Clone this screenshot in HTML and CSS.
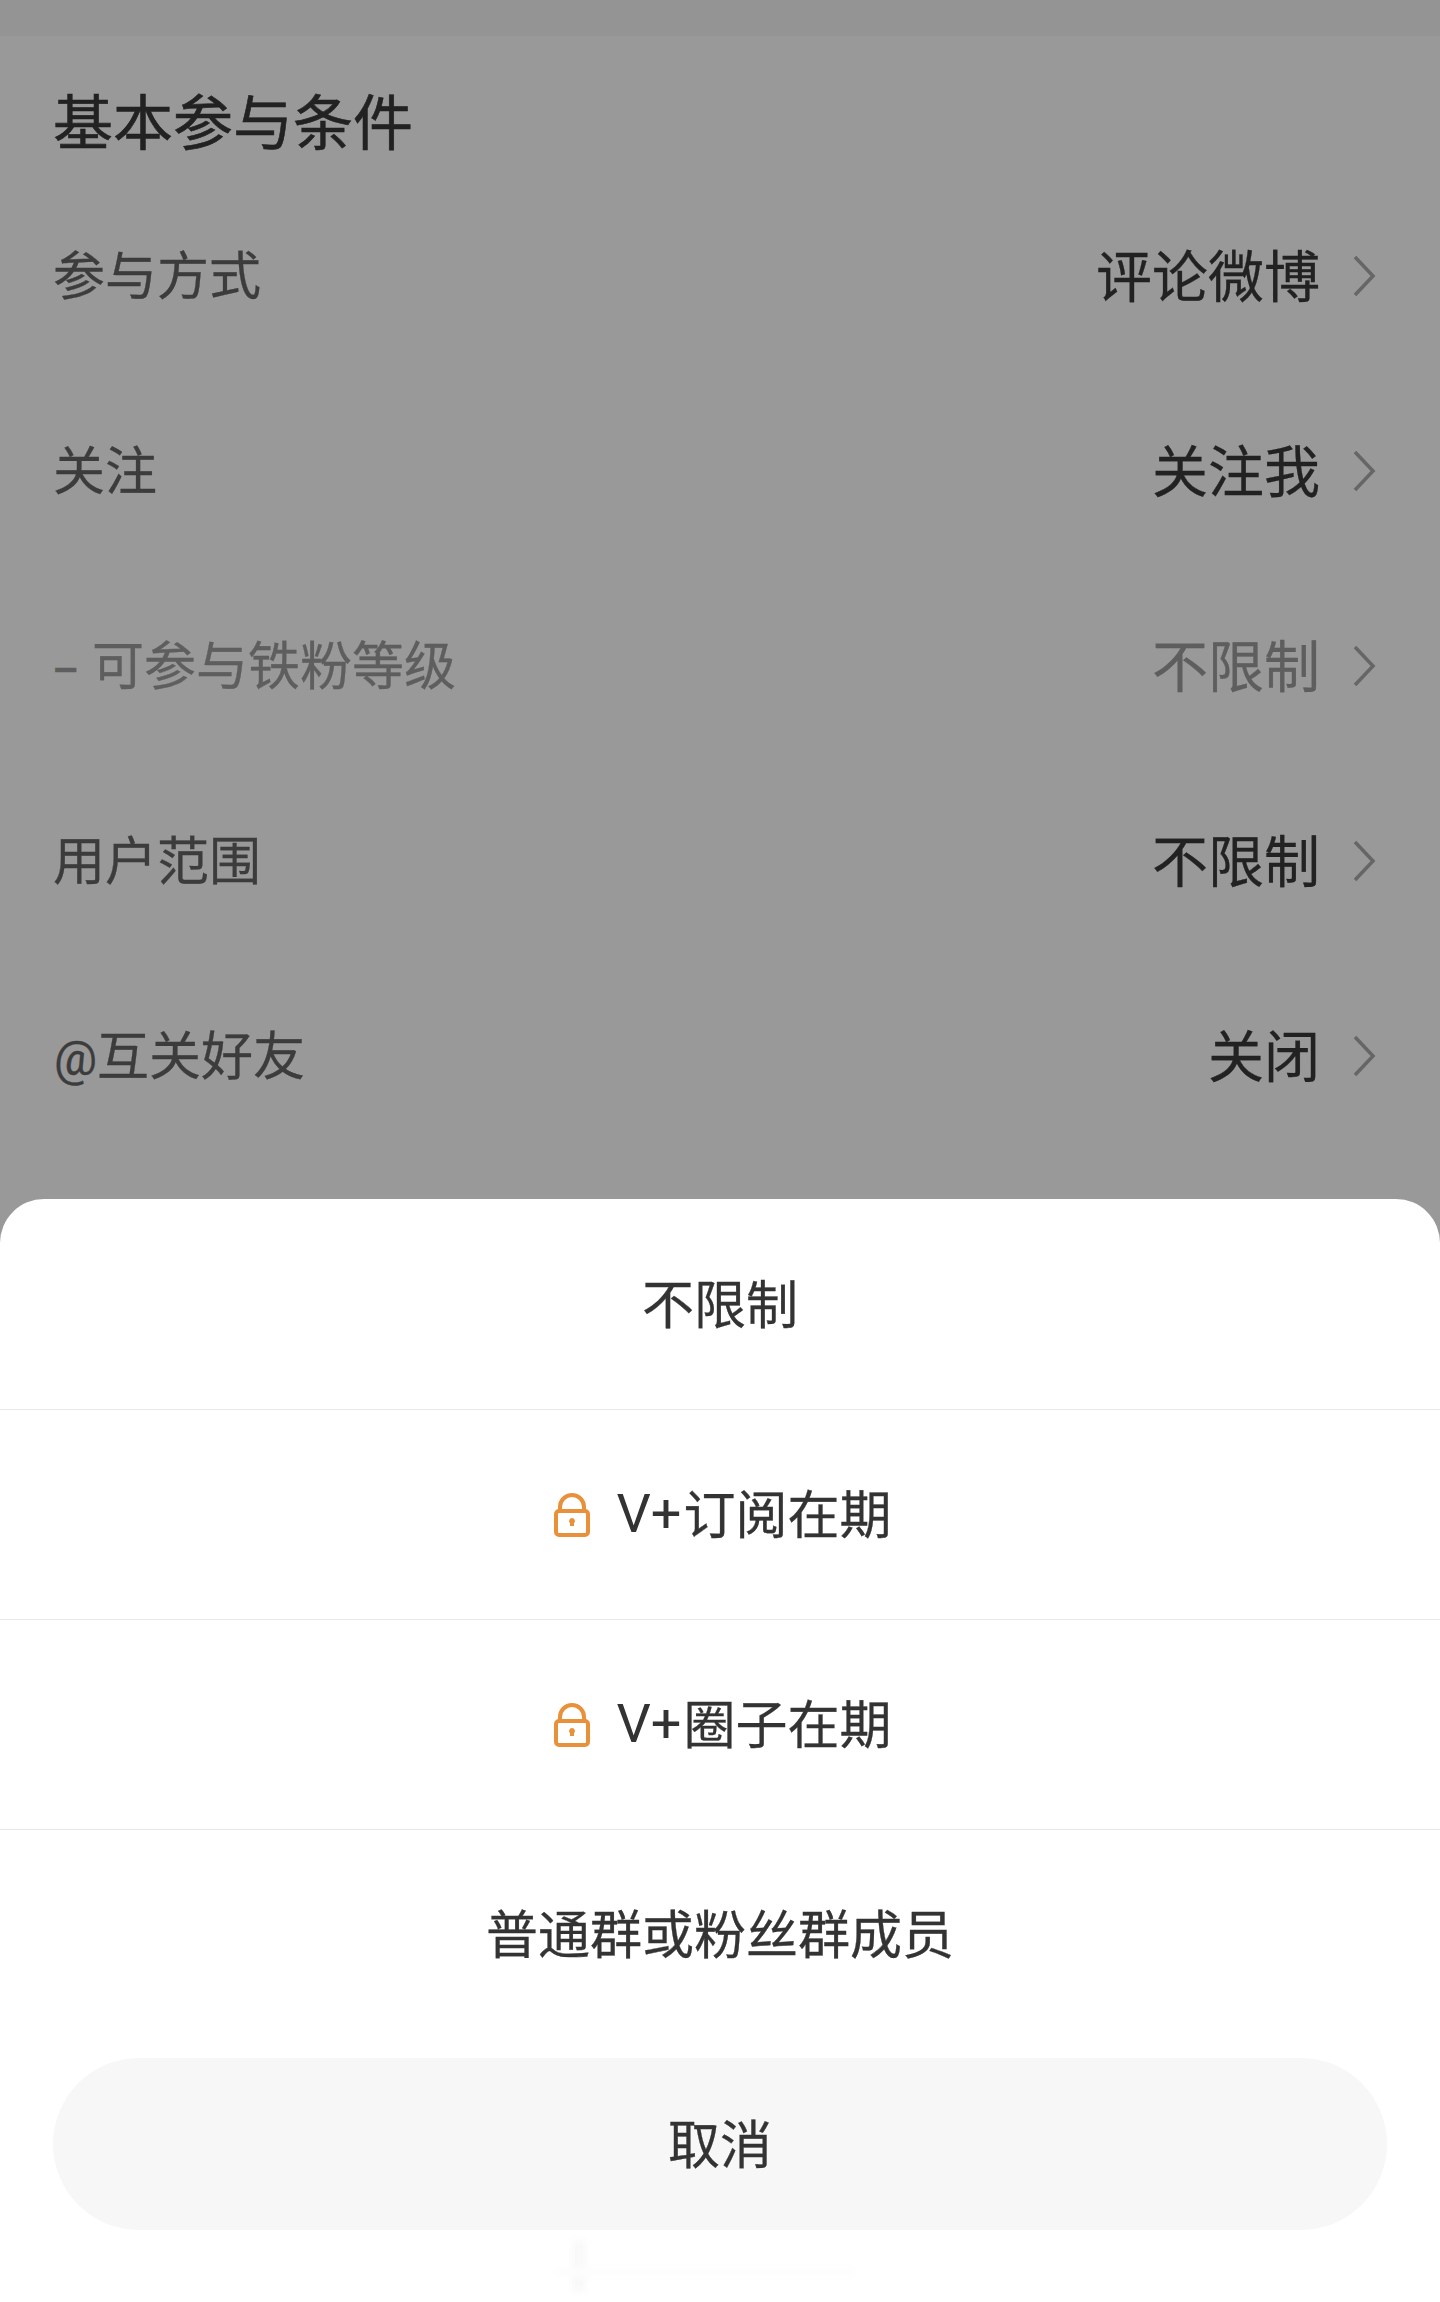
FILE: index.html
```html
<!DOCTYPE html>
<html lang="zh-CN">
<head>
    <meta charset="UTF-8">
    <meta name="viewport" content="width=device-width, initial-scale=1.0">
    <title>基本参与条件</title>
    <link rel="stylesheet" href="styles.css">
</head>
<body>
    <div class="page">
        <div class="status-band"></div>

        <!-- 设置列表 -->
        <div class="settings">
            <h1 class="settings-title">基本参与条件</h1>
            <div class="setting-row">
                <span class="setting-label">参与方式</span>
                <span class="setting-value">评论微博</span>
                <svg class="chevron" viewBox="0 0 24 42"><path d="M3 2l18 19L3 40"/></svg>
            </div>
            <div class="setting-row">
                <span class="setting-label">关注</span>
                <span class="setting-value">关注我</span>
                <svg class="chevron" viewBox="0 0 24 42"><path d="M3 2l18 19L3 40"/></svg>
            </div>
            <div class="setting-row disabled">
                <span class="setting-label"><span class="dash">–</span>可参与铁粉等级</span>
                <span class="setting-value">不限制</span>
                <svg class="chevron" viewBox="0 0 24 42"><path d="M3 2l18 19L3 40"/></svg>
            </div>
            <div class="setting-row">
                <span class="setting-label">用户范围</span>
                <span class="setting-value">不限制</span>
                <svg class="chevron" viewBox="0 0 24 42"><path d="M3 2l18 19L3 40"/></svg>
            </div>
            <div class="setting-row">
                <span class="setting-label"><span class="at">@</span>互关好友</span>
                <span class="setting-value">关闭</span>
                <svg class="chevron" viewBox="0 0 24 42"><path d="M3 2l18 19L3 40"/></svg>
            </div>
        </div>

        <!-- 底部弹层 -->
        <div class="sheet">
            <div class="sheet-option">不限制</div>
            <div class="sheet-option">
                <svg class="lock" viewBox="0 0 36 44"><path d="M6 18v-4a12 12 0 0 1 24 0v4"/><rect x="2" y="18" width="32" height="24" rx="3"/><path class="keyhole" d="M18 25a3 3 0 0 1 2 5.200v2.800h-4v-2.800A3 3 0 0 1 18 25z"/></svg>
                <span class="latin">V+</span>订阅在期
            </div>
            <div class="sheet-option">
                <svg class="lock" viewBox="0 0 36 44"><path d="M6 18v-4a12 12 0 0 1 24 0v4"/><rect x="2" y="18" width="32" height="24" rx="3"/><path class="keyhole" d="M18 25a3 3 0 0 1 2 5.200v2.800h-4v-2.800A3 3 0 0 1 18 25z"/></svg>
                <span class="latin">V+</span>圈子在期
            </div>
            <div class="sheet-option">普通群或粉丝群成员</div>
            <div class="cancel-btn">取消</div>
            <div class="ghost-mark">
                <span class="ghost-cross"></span>
                <span class="ghost-bar"></span>
            </div>
        </div>
    </div>
</body>
</html>
```

FILE: styles.css
```css
html, body {
    margin: 0;
    padding: 0;
}
body {
    font-family: "Noto Sans CJK SC", "Noto Sans", sans-serif;
    background-color: #999;
    -webkit-text-stroke: 0.3px;
}
.page {
    width: 1440px;
    height: 2302px;
    overflow: hidden;
    display: flex;
    flex-direction: column;
}
.status-band {
    height: 36px;
    background-color: #949494;
}
.settings {
    height: 1163px;
    padding: 0 54px 0 53px;
}
.settings-title {
    margin: 0;
    height: 142px;
    line-height: 166px;
    font-size: 60px;
    font-weight: 400;
    color: #222;
    -webkit-text-stroke: 0.6px;
}
.setting-row {
    height: 195px;
    display: flex;
    align-items: center;
}
.setting-label {
    flex: 1;
    font-size: 52px;
    line-height: 68px;
    padding-bottom: 6px;
    color: #3c3c3c;
}
.setting-value {
    font-size: 56px;
    line-height: 68px;
    padding-bottom: 6px;
    margin-right: -3px;
    color: #222;
}
.dash {
    display: inline-block;
    width: 40px;
    margin-left: -1px;
    font-family: "Roboto", sans-serif;
    font-size: 42px;
    font-weight: 500;
    line-height: 0;
}
.at {
    font-family: "Roboto", sans-serif;
    font-size: 48px;
    line-height: 0;
    margin-left: 1px;
}
.chevron {
    width: 24px;
    height: 42px;
    margin: 0 10px 0 35px;
    fill: none;
    stroke: #666;
    stroke-width: 3.5px;
}
.disabled .setting-label,
.disabled .setting-value {
    color: #5e5e5e;
}
.sheet {
    flex: 1;
    background-color: #fff;
    border-radius: 44px 44px 0 0;
    position: relative;
}
.sheet-option {
    height: 205px;
    padding-bottom: 5px;
    display: flex;
    align-items: center;
    justify-content: center;
    font-size: 52px;
    line-height: 68px;
    color: #333;
    border-bottom: 1px solid #e8e8e8;
    margin-bottom: -1px;
}
.sheet-option:nth-child(4) {
    border-bottom-color: transparent;
}
.latin {
    font-family: "Roboto", sans-serif;
    font-size: 54px;
    margin: 5px 2px 0 0;
    -webkit-text-stroke: 0;
}
.lock {
    width: 36px;
    height: 44px;
    margin: 6px 26px 0 6px;
    fill: none;
    stroke: #e8913a;
    stroke-width: 4px;
}
.lock .keyhole {
    fill: #e8913a;
    stroke: none;
}
.cancel-btn {
    margin: 19px 53px 0;
    height: 167px;
    padding-bottom: 5px;
    border-radius: 86px;
    background-color: #f7f7f7;
    display: flex;
    align-items: center;
    justify-content: center;
    font-size: 52px;
    color: #333;
}
/* marca casi invisible debajo del boton */
.ghost-mark {
    position: absolute;
    left: 552px;
    top: 1042px;
    width: 330px;
    height: 56px;
    filter: blur(3px);
}
.ghost-cross {
    position: absolute;
    left: 20px;
    top: 0;
    width: 14px;
    height: 50px;
    background-color: #f9f9f9;
}
.ghost-bar {
    position: absolute;
    left: 4px;
    top: 26px;
    width: 300px;
    height: 10px;
    background-color: #fdfdfd;
}
```
